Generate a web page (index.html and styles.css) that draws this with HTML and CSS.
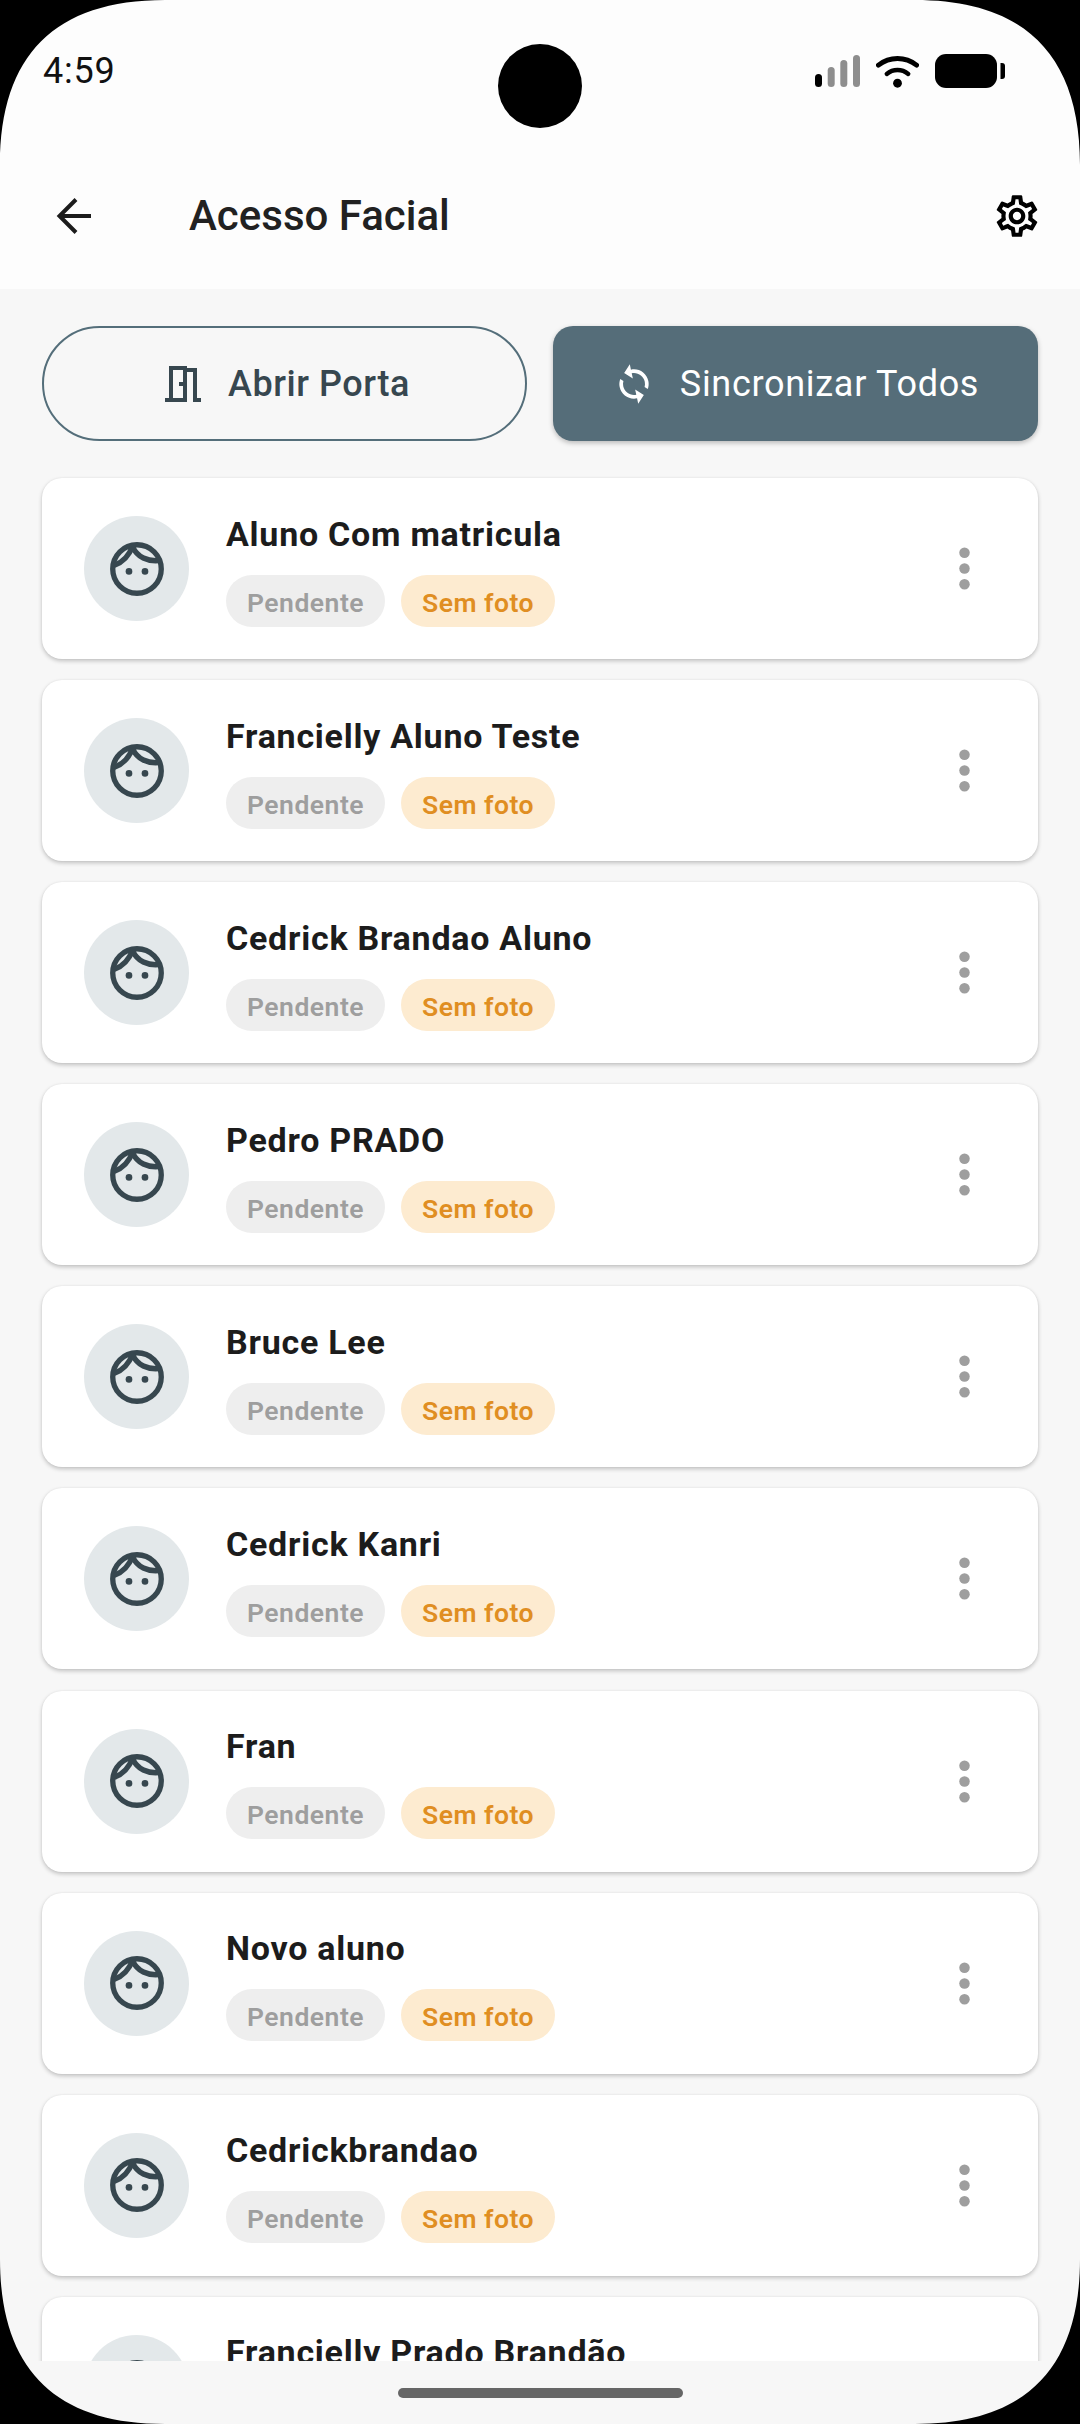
FILE: index.html
```html
<!DOCTYPE html>
<html lang="pt">
<head>
<meta charset="utf-8">
<title>Acesso Facial</title>
<link rel="stylesheet" href="styles.css">
</head>
<body>
<svg width="0" height="0" class="defs">
  <symbol id="face" viewBox="0 0 24 24">
    <circle cx="12" cy="12" r="9.100" fill="none" stroke="currentColor" stroke-width="2"/>
    <path d="M10.300 3.500C9 7 6.500 9.500 3.500 10.600M10.300 3.500C12 7.500 16 9.400 20.800 8.800" fill="none" stroke="currentColor" stroke-width="2"/>
    <circle cx="9" cy="12.900" r="1.250" fill="currentColor"/>
    <circle cx="15" cy="12.900" r="1.250" fill="currentColor"/>
  </symbol>
  <symbol id="more" viewBox="0 0 24 24">
    <circle cx="12" cy="6" r="2" fill="currentColor"/>
    <circle cx="12" cy="12" r="2" fill="currentColor"/>
    <circle cx="12" cy="18" r="2" fill="currentColor"/>
  </symbol>
</svg>
<div class="screen">
  <header class="topbar">
    <div class="status">
      <span class="time">4:59</span>
      <div class="status-icons">
        <svg class="signal" width="45" height="32" viewBox="0 0 45 32">
          <rect x="0" y="19" width="7" height="13" rx="3.500" fill="#000"/>
          <rect x="12.700" y="12" width="7" height="20" rx="3.500" fill="#8e8e8e"/>
          <rect x="25.300" y="5" width="7" height="27" rx="3.500" fill="#8e8e8e"/>
          <rect x="38" y="0" width="7" height="32" rx="3.500" fill="#8e8e8e"/>
        </svg>
        <svg class="wifi" width="43" height="33" viewBox="0 0 44 33">
          <path d="M2.500 10C14 1 30 1 41.500 10" fill="none" stroke="#000" stroke-width="5" stroke-linecap="round"/>
          <path d="M11 19C17.500 13.600 26.500 13.600 33 19" fill="none" stroke="#000" stroke-width="4.500" stroke-linecap="round"/>
          <circle cx="22" cy="28.500" r="4.500" fill="#000"/>
        </svg>
        <svg class="battery" width="70" height="34" viewBox="0 0 70 34">
          <rect x="0" y="0" width="62" height="34" rx="11" fill="#000"/>
          <path d="M65.500 9h1.500a3 3 0 0 1 3 3v10a3 3 0 0 1-3 3h-1.500z" fill="#000"/>
        </svg>
      </div>
    </div>
    <div class="appbar">
      <svg class="back" width="40" height="40" viewBox="0 0 40 40">
        <path d="M38 20H7M23 3.500 6.500 20 23 36.500" fill="none" stroke="#1c1c1c" stroke-width="4"/>
      </svg>
      <h1 class="title">Acesso Facial</h1>
      <svg class="gear" width="50" height="50" viewBox="0 0 24 24">
        <path d="M19.430 12.980c.04-.32.070-.64.070-.98s-.03-.66-.07-.98l2.110-1.650c.19-.15.240-.42.120-.64l-2-3.460c-.12-.22-.39-.3-.61-.22l-2.490 1c-.52-.4-1.080-.73-1.690-.98l-.38-2.650A.488.488 0 0 0 14 2h-4c-.25 0-.46.180-.49.420l-.38 2.650c-.61.250-1.170.590-1.690.980l-2.490-1c-.23-.090-.49 0-.61.220l-2 3.460c-.13.220-.07.490.120.640l2.110 1.650c-.04.320-.07.650-.07.980s.03.660.07.980l-2.110 1.650c-.19.150-.24.420-.12.640l2 3.460c.12.220.39.300.61.220l2.490-1c.52.400 1.080.730 1.690.980l.38 2.650c.03.240.24.420.49.420h4c.25 0 .46-.180.49-.42l.38-2.650c.61-.250 1.170-.590 1.690-.980l2.490 1c.23.090.49 0 .61-.22l2-3.460c.12-.22.070-.49-.12-.64l-2.110-1.650zm-1.980-1.710c.04.310.05.520.05.730 0 .210-.02.430-.05.730l-.14 1.130.89.700 1.080.840-.7 1.210-1.270-.51-1.040-.42-.9.680c-.43.320-.84.560-1.250.730l-1.060.430-.16 1.130-.2 1.350h-1.400l-.19-1.350-.16-1.130-1.060-.43c-.43-.18-.83-.41-1.230-.71l-.91-.7-1.060.430-1.270.51-.7-1.210 1.080-.84.890-.7-.14-1.130c-.03-.31-.05-.54-.05-.74s.02-.43.050-.73l.14-1.130-.89-.7-1.080-.84.7-1.210 1.270.51 1.040.42.9-.68c.43-.32.840-.56 1.250-.73l1.060-.43.16-1.130.2-1.350h1.390l.19 1.350.16 1.130 1.060.43c.43.180.83.410 1.230.71l.91.700 1.060-.43 1.270-.51.7 1.210-1.070.850-.89.700.14 1.130zM12 8c-2.210 0-4 1.790-4 4s1.790 4 4 4 4-1.790 4-4-1.790-4-4-4zm0 6c-1.100 0-2-.9-2-2s.9-2 2-2 2 .9 2 2-.9 2-2 2z" fill="#000"/>
      </svg>
    </div>
  </header>
  <main class="content">
    <div class="actions">
      <button class="btn btn-outline" type="button">
        <svg width="48" height="48" viewBox="0 0 24 24">
          <path d="M14 6v15H3v-2h2V3h9v1h5v15h2v2h-4V6h-3zm-2-1H7v14h5V5zm-2 6h2v2h-2z" fill="#37474f" fill-rule="evenodd"/>
        </svg>
        <span>Abrir Porta</span>
      </button>
      <button class="btn btn-solid" type="button">
        <svg class="sync" width="44" height="44" viewBox="0 0 24 24">
          <path d="M12 4V1L8 5l4 4V6c3.310 0 6 2.690 6 6 0 1.010-.25 1.970-.7 2.800l1.460 1.460C19.540 15.030 20 13.570 20 12c0-4.420-3.580-8-8-8zm0 14c-3.310 0-6-2.690-6-6 0-1.010.25-1.970.7-2.800L5.240 7.740C4.460 8.970 4 10.430 4 12c0 4.420 3.580 8 8 8v3l4-4-4-4v3z" fill="#fff"/>
        </svg>
        <span>Sincronizar Todos</span>
      </button>
    </div>
    <div class="list">
      <article class="card"><div class="avatar"><svg width="64" height="64"><use href="#face"/></svg></div><div class="info"><h2 class="name">Aluno Com matricula</h2><div class="tags"><span class="tag tag-grey">Pendente</span><span class="tag tag-orange">Sem foto</span></div></div><svg class="more" width="63" height="63"><use href="#more"/></svg></article>
      <article class="card"><div class="avatar"><svg width="64" height="64"><use href="#face"/></svg></div><div class="info"><h2 class="name">Francielly Aluno Teste</h2><div class="tags"><span class="tag tag-grey">Pendente</span><span class="tag tag-orange">Sem foto</span></div></div><svg class="more" width="63" height="63"><use href="#more"/></svg></article>
      <article class="card"><div class="avatar"><svg width="64" height="64"><use href="#face"/></svg></div><div class="info"><h2 class="name">Cedrick Brandao Aluno</h2><div class="tags"><span class="tag tag-grey">Pendente</span><span class="tag tag-orange">Sem foto</span></div></div><svg class="more" width="63" height="63"><use href="#more"/></svg></article>
      <article class="card"><div class="avatar"><svg width="64" height="64"><use href="#face"/></svg></div><div class="info"><h2 class="name">Pedro PRADO</h2><div class="tags"><span class="tag tag-grey">Pendente</span><span class="tag tag-orange">Sem foto</span></div></div><svg class="more" width="63" height="63"><use href="#more"/></svg></article>
      <article class="card"><div class="avatar"><svg width="64" height="64"><use href="#face"/></svg></div><div class="info"><h2 class="name">Bruce Lee</h2><div class="tags"><span class="tag tag-grey">Pendente</span><span class="tag tag-orange">Sem foto</span></div></div><svg class="more" width="63" height="63"><use href="#more"/></svg></article>
      <article class="card"><div class="avatar"><svg width="64" height="64"><use href="#face"/></svg></div><div class="info"><h2 class="name">Cedrick Kanri</h2><div class="tags"><span class="tag tag-grey">Pendente</span><span class="tag tag-orange">Sem foto</span></div></div><svg class="more" width="63" height="63"><use href="#more"/></svg></article>
      <article class="card"><div class="avatar"><svg width="64" height="64"><use href="#face"/></svg></div><div class="info"><h2 class="name">Fran</h2><div class="tags"><span class="tag tag-grey">Pendente</span><span class="tag tag-orange">Sem foto</span></div></div><svg class="more" width="63" height="63"><use href="#more"/></svg></article>
      <article class="card"><div class="avatar"><svg width="64" height="64"><use href="#face"/></svg></div><div class="info"><h2 class="name">Novo aluno</h2><div class="tags"><span class="tag tag-grey">Pendente</span><span class="tag tag-orange">Sem foto</span></div></div><svg class="more" width="63" height="63"><use href="#more"/></svg></article>
      <article class="card"><div class="avatar"><svg width="64" height="64"><use href="#face"/></svg></div><div class="info"><h2 class="name">Cedrickbrandao</h2><div class="tags"><span class="tag tag-grey">Pendente</span><span class="tag tag-orange">Sem foto</span></div></div><svg class="more" width="63" height="63"><use href="#more"/></svg></article>
      <article class="card"><div class="avatar"><svg width="64" height="64"><use href="#face"/></svg></div><div class="info"><h2 class="name">Francielly Prado Brandão</h2><div class="tags"><span class="tag tag-grey">Pendente</span><span class="tag tag-orange">Sem foto</span></div></div><svg class="more" width="63" height="63"><use href="#more"/></svg></article>
    </div>
  </main>
  <footer class="navbar"><div class="handle"></div></footer>
  <div class="camera"></div>
  <svg class="frame" width="1080" height="2424" viewBox="0 0 1080 2424">
    <path fill-rule="evenodd" fill="#000" d="M0 0H1080V2424H0ZM0 165C0 55 55 0 165 0H915C1025 0 1080 55 1080 165V2259C1080 2369 1025 2424 915 2424H165C55 2424 0 2369 0 2259Z"/>
  </svg>
</div>
</body>
</html>
```
FILE: styles.css
```css
* { box-sizing: border-box; margin: 0; padding: 0; }
html, body { width: 1080px; height: 2424px; overflow: hidden; background: #000; }
body { font-family: Roboto, "Liberation Sans", sans-serif; }
.defs { position: absolute; }

.screen {
  position: relative;
  width: 1080px;
  height: 2424px;
  overflow: hidden;
  display: flex;
  flex-direction: column;
  background: #f7f7f7;
}

.topbar { height: 289px; flex: none; background: #fdfdfd; }
.status {
  height: 142px;
  padding: 49px 42px 0 43px;
  display: flex;
  justify-content: space-between;
  align-items: flex-start;
}
.time { font-size: 36px; line-height: 44px; letter-spacing: .8px; color: #111; }
.status-icons { display: flex; align-items: flex-start; gap: 16px; padding-top: 6px; padding-right: 33px; }
.battery { margin-top: -1px; }

.appbar {
  height: 147px;
  padding: 0 38px 0 53px;
  display: flex;
  align-items: center;
}
.back { flex: none; }
.title {
  margin-left: 96px;
  flex: 1;
  font-size: 42px;
  font-weight: 500;
  color: #212121;
}
.gear { flex: none; }

.content { flex: 1; min-height: 0; overflow: hidden; padding: 37px 42px 0; }
.actions { display: flex; gap: 26px; height: 115px; }
.btn {
  font-family: inherit;
  font-size: 36px;
  display: flex;
  align-items: center;
  justify-content: center;
  height: 115px;
}
.btn-outline {
  flex: 0 0 485px;
  gap: 21px;
  border: 2px solid #546e7a;
  border-radius: 58px;
  background: transparent;
  color: #37474f;
  font-weight: 500;
  letter-spacing: .55px;
}
.btn-solid {
  flex: 1;
  gap: 24px;
  border: 0;
  border-radius: 20px;
  background: #556d79;
  color: #fff;
  font-weight: 400;
  letter-spacing: .7px;
  box-shadow: 0 2px 5px rgba(0, 0, 0, .25);
}
.sync { transform: rotate(-12deg); }

.list { display: flex; flex-direction: column; gap: 21.100px; margin-top: 37px; }
.card {
  flex: none;
  height: 181px;
  display: flex;
  align-items: center;
  padding: 0 42px 0 42px;
  background: #fff;
  border-radius: 20px;
  box-shadow: 0 2px 4px rgba(0, 0, 0, .22), 0 0 2px rgba(0, 0, 0, .06);
}
.avatar {
  flex: none;
  width: 105px;
  height: 105px;
  border-radius: 50%;
  background: #e3e8ea;
  color: #37474f;
  display: flex;
  align-items: center;
  justify-content: center;
}
.info { flex: 1; margin-left: 37px; padding-top: 3px; display: flex; flex-direction: column; gap: 21px; }
.name { font-size: 34px; line-height: 40px; font-weight: 700; letter-spacing: .75px; color: #1c1c1c; }
.tags { display: flex; gap: 16px; }
.tag {
  height: 52px;
  padding: 3px 21px 0;
  border-radius: 26px;
  display: flex;
  align-items: center;
  font-size: 26.500px;
  letter-spacing: .5px;
  font-weight: 600;
}
.tag-grey { background: #eeeeee; color: #9e9e9e; }
.tag-orange { background: #fdebd0; color: #e08e22; }
.more { flex: none; color: #9e9e9e; }

.navbar {
  position: absolute;
  left: 0;
  right: 0;
  bottom: 0;
  height: 63px;
  background: #f7f7f7;
  display: flex;
  justify-content: center;
  padding-top: 27px;
}
.handle { width: 285px; height: 10px; border-radius: 5px; background: #666; }
.camera {
  position: absolute;
  left: 498px;
  top: 44px;
  width: 84px;
  height: 84px;
  border-radius: 50%;
  background: #000;
}
.frame { position: absolute; left: 0; top: 0; pointer-events: none; }
```
